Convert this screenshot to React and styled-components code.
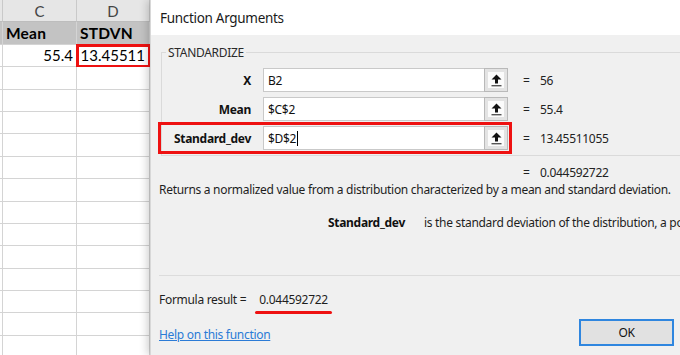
import React from "react";
import styled, { createGlobalStyle } from "styled-components";

const Global = createGlobalStyle`
  html, body { margin: 0; padding: 0; background: #ffffff; }
  body { width: 680px; height: 355px; overflow: hidden; }
  #root { width: 680px; height: 355px; }
`;

const Screen = styled.div`
  display: flex;
  width: 680px;
  height: 355px;
  overflow: hidden;
  background: #ffffff;
`;

/* ---------- Spreadsheet ---------- */
const Sheet = styled.div`
  flex: 0 0 150px;
  display: grid;
  grid-template-columns: 3px 74px 73px;
  grid-auto-rows: 22.4px;
  font-family: Lato, "Liberation Sans", sans-serif;
  font-size: 15px;
  color: #000;
`;

const Cell = styled.div`
  box-sizing: border-box;
  display: flex;
  align-items: center;
  justify-content: ${(p) => (p.$align === "right" ? "flex-end" : p.$align === "center" ? "center" : "flex-start")};
  padding: 0 3px;
  border-right: 1px solid #d4d4d4;
  border-bottom: 1px solid #d4d4d4;
  background: ${(p) => (p.$kind === "head" ? "#e6e6e6" : p.$kind === "title" ? "#c3c3c3" : "#ffffff")};
  color: ${(p) => (p.$kind === "head" ? "#444" : "#000")};
  font-weight: ${(p) => (p.$kind === "title" ? 700 : 400)};
  white-space: nowrap;
  ${(p) => (p.$kind === "title" ? "font-size:15.5px;letter-spacing:0.2px;" : "")}
  ${(p) => (p.$kind === "head" ? "border-right-color:#c9c9c9;border-bottom-color:#bdbdbd;" : "")}
  ${(p) =>
    p.$marked
      ? `outline: 3px solid #ee1111; outline-offset: -2px; padding-right: 4px;`
      : ""}
`;

const Edge = styled(Cell)`
  padding: 0;
`;

/* ---------- Dialog ---------- */
const Dialog = styled.div`
  position: relative;
  z-index: 2;
  flex: 0 0 560px;
  display: flex;
  flex-direction: column;
  background: #f0f0f0;
  border-left: 1px solid #d8d8d8;
  box-shadow: -3px 0 8px rgba(0, 0, 0, 0.18);
  font-family: "Noto Sans", "Open Sans", sans-serif;
  font-size: 12px;
  letter-spacing: -0.3px;
  color: #1e1e1e;
`;

const TitleBar = styled.div`
  height: 35px;
  display: flex;
  align-items: center;
  padding-left: 9px;
  background: #ffffff;
  font-size: 13.5px;
  color: #1a1a1a;
`;

const Body = styled.div`
  display: flex;
  flex-direction: column;
  padding: 0 0 0 8px;
`;

const Group = styled.fieldset`
  margin: 9px 0 0 2px;
  padding: 7px 0 5px 0;
  border: 1px solid #dadada;
  border-right: none;
  min-width: 0;
`;

const Legend = styled.legend`
  margin-left: 4px;
  padding: 0 2px;
  font-size: 12px;
  color: #2a2a2a;
  line-height: 17px;
`;

const ArgList = styled.div`
  display: flex;
  flex-direction: column;
  gap: 5px;
`;

const ArgRow = styled.div`
  display: flex;
  align-items: center;
  height: 24px;
`;

const Field = styled.div`
  display: flex;
  align-items: stretch;
  height: 24px;
  ${(p) => (p.$highlight ? "outline: 3px solid #ee1111; outline-offset: 1px;" : "")}
`;

const ArgLabel = styled.div`
  width: 101px;
  box-sizing: border-box;
  padding-right: 12px;
  display: flex;
  align-items: center;
  justify-content: flex-end;
  font-weight: 700;
  color: #111;
`;

const Input = styled.div`
  width: 221px;
  box-sizing: border-box;
  background: #ffffff;
  border: 1px solid #c9c9c9;
  border-right: none;
  display: flex;
  align-items: center;
  padding-left: 4px;
  color: #111;
`;

const Caret = styled.span`
  display: inline-block;
  width: 1px;
  height: 15px;
  background: #000;
  margin-left: 1px;
`;

const PickButton = styled.div`
  width: 24px;
  box-sizing: border-box;
  border: 1px solid #b9b9b9;
  background: #e3e3e3;
  display: flex;
  align-items: center;
  justify-content: center;
`;

const PickInner = styled.div`
  width: 16px;
  height: 16px;
  background: #fbfbfb;
  display: flex;
  align-items: center;
  justify-content: center;
`;

const Eq = styled.span`
  margin-left: ${(p) => (p.$flush ? 0 : 15)}px;
  width: 17px;
  color: #222;
`;

const Value = styled.span`
  color: #222;
`;

const ResultLine = styled.div`
  display: flex;
  align-items: center;
  height: 18px;
  margin-top: 7px;
  padding-left: 364px;
`;

const Description = styled.div`
  height: 18px;
  line-height: 18px;
  white-space: nowrap;
  color: #1e1e1e;
`;

const ArgHelp = styled.div`
  display: flex;
  margin-top: 15px;
  height: 18px;
  line-height: 18px;
  white-space: nowrap;
`;

const ArgHelpName = styled.span`
  width: 246px;
  text-align: right;
  font-weight: 700;
  color: #111;
  flex: 0 0 auto;
`;

const ArgHelpText = styled.span`
  margin-left: 19px;
`;

const Separator = styled.div`
  margin-top: 43px;
  height: 1px;
  background: #dcdcdc;
`;

const FormulaRow = styled.div`
  display: flex;
  align-items: center;
  margin-top: 14px;
  height: 18px;
`;

const FormulaValue = styled.span`
  position: relative;
  margin-left: 11px;
  padding: 0 2px;
  &::after {
    content: "";
    position: absolute;
    left: -2px;
    right: -2px;
    bottom: -6px;
    height: 3px;
    border-radius: 2px;
    background: #ee1111;
  }
`;

const Footer = styled.div`
  display: grid;
  grid-template-columns: 420px 95px;
  align-items: center;
  margin-top: 10px;
  height: 29px;
`;

const HelpLink = styled.a`
  justify-self: start;
  color: #2b7bd6;
  text-decoration: underline;
  cursor: pointer;
  margin-top: 3px;
`;

const OkButton = styled.div`
  width: 95px;
  height: 27px;
  box-sizing: border-box;
  border: 2px solid #2f86df;
  background: #e1e1e1;
  display: flex;
  align-items: center;
  justify-content: center;
  color: #111;
`;

const PickIcon = () => (
  <svg width="11" height="13" viewBox="0 0 11 13">
    <path d="M5.5 0.5 L10.5 5.5 L7 5.5 L7 9.5 L4 9.5 L4 5.5 L0.5 5.5 Z" fill="#111" />
    <rect x="0.5" y="11" width="10" height="1.4" fill="#555" />
  </svg>
);

const args = [
  { name: "X", value: "B2", result: "56" },
  { name: "Mean", value: "$C$2", result: "55.4" },
  { name: "Standard_dev", value: "$D$2", result: "13.45511055", highlight: true, caret: true },
];

const sheetRows = [
  [{ t: "", k: "head" }, { t: "C", k: "head", a: "center" }, { t: "D", k: "head", a: "center" }],
  [{ t: "", k: "title" }, { t: "Mean", k: "title" }, { t: "STDVN", k: "title" }],
  [{ t: "" }, { t: "55.4", a: "right" }, { t: "13.45511", a: "right", m: true }],
];
for (let i = 0; i < 13; i++) sheetRows.push([{ t: "" }, { t: "" }, { t: "" }]);

export default function App() {
  return (
    <>
      <Global />
      <Screen>
        <Sheet>
          {sheetRows.map((row, r) =>
            row.map((c, i) =>
              i === 0 ? (
                <Edge key={`${r}-${i}`} $kind={c.k} />
              ) : (
                <Cell key={`${r}-${i}`} $kind={c.k} $align={c.a} $marked={c.m}>
                  {c.t}
                </Cell>
              )
            )
          )}
        </Sheet>
        <Dialog>
          <TitleBar>Function Arguments</TitleBar>
          <Body>
            <Group>
              <Legend>STANDARDIZE</Legend>
              <ArgList>
                {args.map((a) => (
                  <ArgRow key={a.name}>
                    <Field $highlight={a.highlight}>
                      <ArgLabel>{a.name}</ArgLabel>
                      <Input>
                        {a.value}
                        {a.caret && <Caret />}
                      </Input>
                      <PickButton>
                        <PickInner>
                          <PickIcon />
                        </PickInner>
                      </PickButton>
                    </Field>
                    <Eq>=</Eq>
                    <Value>{a.result}</Value>
                  </ArgRow>
                ))}
              </ArgList>
            </Group>
            <ResultLine>
              <Eq $flush>=</Eq>
              <Value>0.044592722</Value>
            </ResultLine>
            <Description>
              Returns a normalized value from a distribution characterized by a mean and standard deviation.
            </Description>
            <ArgHelp>
              <ArgHelpName>Standard_dev</ArgHelpName>
              <ArgHelpText>is the standard deviation of the distribution, a positive number.</ArgHelpText>
            </ArgHelp>
            <Separator />
            <FormulaRow>
              Formula result =<FormulaValue>0.044592722</FormulaValue>
            </FormulaRow>
            <Footer>
              <HelpLink>Help on this function</HelpLink>
              <OkButton>OK</OkButton>
            </Footer>
          </Body>
        </Dialog>
      </Screen>
    </>
  );
}
